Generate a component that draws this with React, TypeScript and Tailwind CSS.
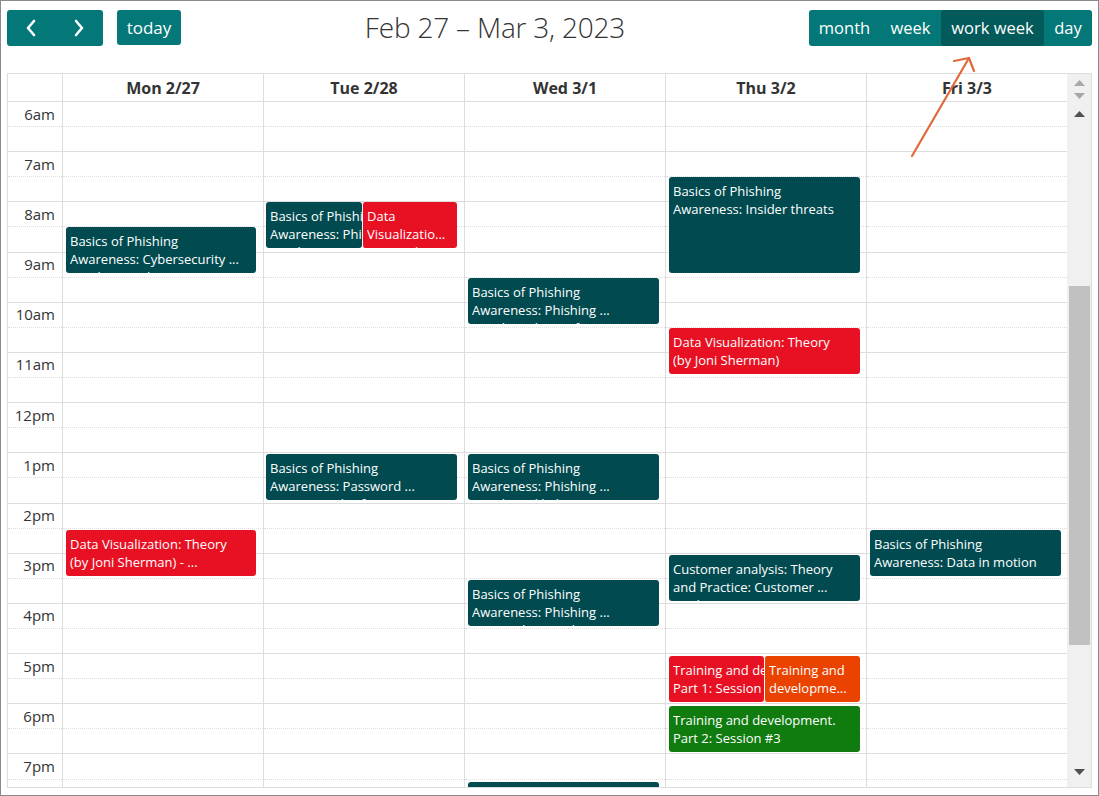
import React from "react";

type Ev = { top: number; h: number; left: number; w: number; color: string; lines: string[]; bl?: boolean; z?: number };

const TEAL = "bg-[#014b50]";
const RED = "bg-[#e81123]";
const ORANGE = "bg-[#ea4300]";
const GREEN = "bg-[#107c10]";

const days: { label: string; events: Ev[] }[] = [
  {
    label: "Mon 2/27",
    events: [
      { top: 125, h: 46, left: 3, w: 190, color: TEAL, lines: ["Basics of Phishing", "Awareness: Cybersecurity ...", "Fundamentals"] },
      { top: 428, h: 46, left: 3, w: 190, color: RED, lines: ["Data Visualization: Theory", "(by Joni Sherman) - ...", "(Lecture)"] },
    ],
  },
  {
    label: "Tue 2/28",
    events: [
      { top: 100, h: 46, left: 2, w: 96, color: TEAL, lines: ["Basics of Phishing", "Awareness: Phishing ...", "- and more"] },
      { top: 100, h: 46, left: 98, w: 95, color: RED, lines: ["Data", "Visualizatio...", "Practical"], bl: true, z: 2 },
      { top: 352, h: 46, left: 2, w: 191, color: TEAL, lines: ["Basics of Phishing", "Awareness: Password ...", "security and safety"] },
    ],
  },
  {
    label: "Wed 3/1",
    events: [
      { top: 176, h: 46, left: 3, w: 191, color: TEAL, lines: ["Basics of Phishing", "Awareness: Phishing ...", "emails and (spoofing)"] },
      { top: 352, h: 46, left: 3, w: 191, color: TEAL, lines: ["Basics of Phishing", "Awareness: Phishing ...", "emails and links"] },
      { top: 478, h: 46, left: 3, w: 191, color: TEAL, lines: ["Basics of Phishing", "Awareness: Phishing ...", "on social networks"] },
      { top: 680, h: 46, left: 3, w: 191, color: TEAL, lines: ["Basics of Phishing", "Awareness", ""] },
    ],
  },
  {
    label: "Thu 3/2",
    events: [
      { top: 75, h: 96, left: 3, w: 191, color: TEAL, lines: ["Basics of Phishing", "Awareness: Insider threats"] },
      { top: 226, h: 46, left: 3, w: 191, color: RED, lines: ["Data Visualization: Theory", "(by Joni Sherman)"] },
      { top: 453, h: 46, left: 3, w: 191, color: TEAL, lines: ["Customer analysis: Theory", "and Practice: Customer ...", "Analysis, segmentation"] },
      { top: 554, h: 46, left: 3, w: 95, color: RED, lines: ["Training and development.", "Part 1: Session #1", ""] },
      { top: 554, h: 46, left: 98, w: 96, color: ORANGE, lines: ["Training and", "developme...", "Part 2"], bl: true, z: 2 },
      { top: 604, h: 46, left: 3, w: 191, color: GREEN, lines: ["Training and development.", "Part 2: Session #3"] },
    ],
  },
  {
    label: "Fri 3/3",
    events: [
      { top: 428, h: 46, left: 3, w: 191, color: TEAL, lines: ["Basics of Phishing", "Awareness: Data in motion"] },
    ],
  },
];

const hours = ["6am", "7am", "8am", "9am", "10am", "11am", "12pm", "1pm", "2pm", "3pm", "4pm", "5pm", "6pm", "7pm"];
const slots = Array.from({ length: hours.length * 2 }, (_, i) => i);

function Slots({ labels }: { labels?: boolean }) {
  return (
    <>
      {slots.map((i) => (
        <div
          key={i}
          className={
            "h-[25.1px] shrink-0 border-b border-[#dddddd] " +
            (i % 2 === 0 ? "border-dotted " : "border-solid ") +
            (labels ? "flex items-center justify-end pr-[7px] text-[15px] text-[#333333] leading-none" : "")
          }
        >
          {labels && i % 2 === 0 ? hours[i / 2] : null}
        </div>
      ))}
    </>
  );
}

function Tri({ up, color }: { up?: boolean; color: string }) {
  return (
    <svg width="11" height="6" viewBox="0 0 11 6" className="block">
      <polygon points={up ? "5.5,0 11,6 0,6" : "0,0 11,0 5.5,6"} fill={color} />
    </svg>
  );
}

function Chevron({ left }: { left?: boolean }) {
  return (
    <svg width="12" height="18" viewBox="0 0 12 18" className="block">
      <polyline
        points={left ? "9,2 3,9 9,16" : "3,2 9,9 3,16"}
        fill="none"
        stroke="white"
        strokeWidth="2.6"
        strokeLinecap="round"
        strokeLinejoin="round"
      />
    </svg>
  );
}

export default function App() {
  return (
    <div className="relative w-[1099px] h-[796px] overflow-hidden border border-[#8a8a8a] bg-white px-[6px] pt-[9px] font-['Open_Sans','Noto_Sans',sans-serif] text-[#333333]">
      {/* toolbar */}
      <div className="flex items-center justify-between h-[36px]">
        <div className="flex items-center gap-[14px]">
          <div className="flex h-[36px] rounded-[3px] overflow-hidden bg-[#047878]">
            <button className="w-[48px] h-full flex items-center justify-center">
              <Chevron left />
            </button>
            <button className="w-[48px] h-full flex items-center justify-center">
              <Chevron />
            </button>
          </div>
          <button className="h-[35px] w-[64px] self-start rounded-[3px] bg-[#047878] text-white text-[17px] leading-none">today</button>
        </div>
        <div className="text-[28px] font-light text-[#333333] leading-none tracking-[-0.2px] pb-[2px]">Feb 27 – Mar 3, 2023</div>
        <div className="flex h-[36px] rounded-[3px] overflow-hidden bg-[#047878] text-white text-[16.5px] leading-none">
          <button className="w-[71px] h-full">month</button>
          <button className="w-[61px] h-full">week</button>
          <button className="w-[103px] h-full bg-[#035a5a] rounded-[3px]">work week</button>
          <button className="w-[48px] h-full">day</button>
        </div>
      </div>

      {/* calendar grid */}
      <div className="mt-[27px] h-[715px] flex border border-[#dddddd]">
        <div className="flex-1 flex flex-col min-w-0">
          {/* header */}
          <div className="flex h-[28px] shrink-0 border-b border-[#dddddd]">
            <div className="w-[54px] shrink-0" />
            {days.map((d) => (
              <div key={d.label} className="w-[201px] shrink-0 border-l border-[#dddddd] flex items-center justify-center text-[16px] font-bold text-[#333333]">
                {d.label}
              </div>
            ))}
          </div>
          {/* body */}
          <div className="flex flex-1 overflow-hidden">
            <div className="w-[54px] shrink-0 flex flex-col">
              <Slots labels />
            </div>
            {days.map((d) => (
              <div key={d.label} className="relative w-[201px] shrink-0 border-l border-[#dddddd] flex flex-col">
                <Slots />
                {d.events.map((e, i) => (
                  <div
                    key={i}
                    className={
                      "absolute overflow-hidden rounded-[3px] pl-[4px] pt-[5px] text-white text-[13px] " +
                      e.color +
                      (e.bl ? " border-l border-white pl-[4px]" : "")
                    }
                    style={{ top: e.top, height: e.h, left: e.left, width: e.w, zIndex: e.z ?? 1 }}
                  >
                    {e.lines.map((l, j) => (
                      <div key={j} className="whitespace-nowrap overflow-hidden leading-[18px]">
                        {l || "\u00a0"}
                      </div>
                    ))}
                  </div>
                ))}
              </div>
            ))}
          </div>
        </div>
        {/* scrollbar column */}
        <div className="w-[24px] shrink-0 bg-[#f0f0f0] flex flex-col">
          <div className="h-[28px] shrink-0 flex flex-col items-center pt-[6px] gap-[7px]">
            <Tri up color="#a8a8a8" />
            <Tri color="#a8a8a8" />
          </div>
          <div className="h-[24px] shrink-0 flex items-center justify-center">
            <Tri up color="#505050" />
          </div>
          <div className="h-[160px] shrink-0" />
          <div className="h-[359px] w-[21px] ml-[2px] shrink-0 bg-[#c1c1c1]" />
          <div className="flex-1" />
          <div className="h-[30px] shrink-0 flex items-center justify-center">
            <Tri color="#505050" />
          </div>
        </div>
      </div>

      {/* annotation arrow */}
      <svg className="absolute left-0 top-0 pointer-events-none" width="1099" height="796">
        <g stroke="#e2683a" strokeWidth="2.2" strokeLinecap="round" fill="none">
          <line x1="911" y1="155" x2="968" y2="57" />
          <line x1="968" y1="57" x2="953" y2="60" />
          <line x1="968" y1="57" x2="973" y2="70" />
        </g>
      </svg>
    </div>
  );
}
